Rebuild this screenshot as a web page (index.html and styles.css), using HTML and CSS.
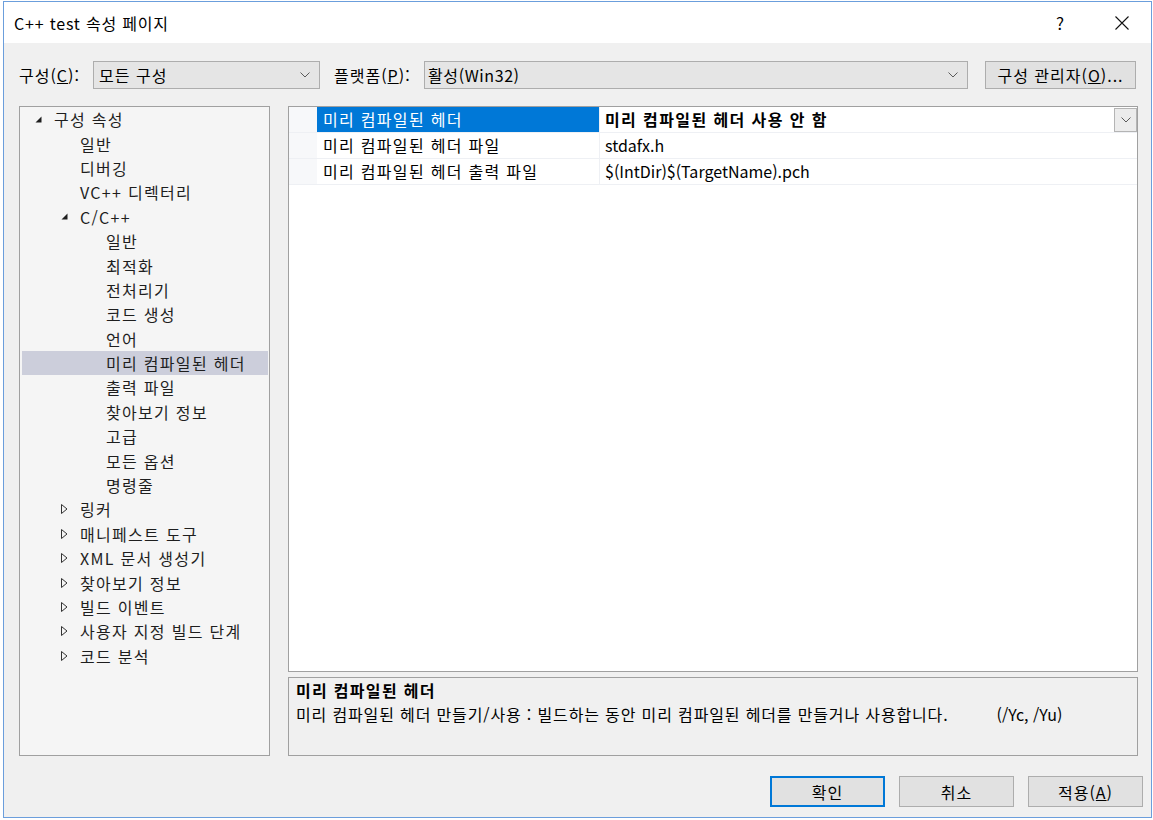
FILE: index.html
```html
<!DOCTYPE html>
<html lang="ko">
<head>
<meta charset="utf-8">
<title>C++ test 속성 페이지</title>
<link rel="stylesheet" href="styles.css">
</head>
<body>
<div class="window">
  <div class="titlebar">
    <span class="title">C++ test 속성 페이지</span>
    <span class="tb-help">?</span>
    <span class="tb-close"><svg width="14" height="14" viewBox="0 0 14 14"><path d="M0.5 0.5 L13.5 13.5 M13.5 0.5 L0.5 13.5" stroke="#111" stroke-width="1.1" fill="none"/></svg></span>
  </div>
  <div class="content">
    <div class="toolbar">
      <span class="tlabel tlabel-config">구성(<u>C</u>):</span>
      <div class="combo combo-config"><span>모든 구성</span><svg class="chev" width="10" height="6" viewBox="0 0 10 6"><path d="M0.5 0.5 L5 5 L9.5 0.5" stroke="#5a5a5a" stroke-width="1" fill="none"/></svg></div>
      <span class="tlabel tlabel-platform">플랫폼(<u>P</u>):</span>
      <div class="combo combo-platform"><span>활성(Win32)</span><svg class="chev" width="10" height="6" viewBox="0 0 10 6"><path d="M0.5 0.5 L5 5 L9.5 0.5" stroke="#5a5a5a" stroke-width="1" fill="none"/></svg></div>
      <button class="btn btn-manager">구성 관리자(<u>O</u>)...</button>
    </div>
    <div class="main">
      <div class="tree">
        <div class="trow l0"><span class="arrow"><svg width="7" height="7" viewBox="0 0 7 7"><polygon points="6.5,0.5 6.5,6.5 0.5,6.5" fill="#1e1e1e"/></svg></span>구성 속성</div>
        <div class="trow l1"><span class="arrow"></span>일반</div>
        <div class="trow l1"><span class="arrow"></span>디버깅</div>
        <div class="trow l1"><span class="arrow"></span>VC++ 디렉터리</div>
        <div class="trow l1"><span class="arrow"><svg width="7" height="7" viewBox="0 0 7 7"><polygon points="6.5,0.5 6.5,6.5 0.5,6.5" fill="#1e1e1e"/></svg></span>C/C++</div>
        <div class="trow l2"><span class="arrow"></span>일반</div>
        <div class="trow l2"><span class="arrow"></span>최적화</div>
        <div class="trow l2"><span class="arrow"></span>전처리기</div>
        <div class="trow l2"><span class="arrow"></span>코드 생성</div>
        <div class="trow l2"><span class="arrow"></span>언어</div>
        <div class="trow l2 selected"><span class="arrow"></span>미리 컴파일된 헤더</div>
        <div class="trow l2"><span class="arrow"></span>출력 파일</div>
        <div class="trow l2"><span class="arrow"></span>찾아보기 정보</div>
        <div class="trow l2"><span class="arrow"></span>고급</div>
        <div class="trow l2"><span class="arrow"></span>모든 옵션</div>
        <div class="trow l2"><span class="arrow"></span>명령줄</div>
        <div class="trow l1"><span class="arrow"><svg width="7" height="10" viewBox="0 0 7 10"><polygon points="0.5,0.5 6,5 0.5,9.5" fill="none" stroke="#333" stroke-width="1"/></svg></span>링커</div>
        <div class="trow l1"><span class="arrow"><svg width="7" height="10" viewBox="0 0 7 10"><polygon points="0.5,0.5 6,5 0.5,9.5" fill="none" stroke="#333" stroke-width="1"/></svg></span>매니페스트 도구</div>
        <div class="trow l1"><span class="arrow"><svg width="7" height="10" viewBox="0 0 7 10"><polygon points="0.5,0.5 6,5 0.5,9.5" fill="none" stroke="#333" stroke-width="1"/></svg></span>XML 문서 생성기</div>
        <div class="trow l1"><span class="arrow"><svg width="7" height="10" viewBox="0 0 7 10"><polygon points="0.5,0.5 6,5 0.5,9.5" fill="none" stroke="#333" stroke-width="1"/></svg></span>찾아보기 정보</div>
        <div class="trow l1"><span class="arrow"><svg width="7" height="10" viewBox="0 0 7 10"><polygon points="0.5,0.5 6,5 0.5,9.5" fill="none" stroke="#333" stroke-width="1"/></svg></span>빌드 이벤트</div>
        <div class="trow l1"><span class="arrow"><svg width="7" height="10" viewBox="0 0 7 10"><polygon points="0.5,0.5 6,5 0.5,9.5" fill="none" stroke="#333" stroke-width="1"/></svg></span>사용자 지정 빌드 단계</div>
        <div class="trow l1"><span class="arrow"><svg width="7" height="10" viewBox="0 0 7 10"><polygon points="0.5,0.5 6,5 0.5,9.5" fill="none" stroke="#333" stroke-width="1"/></svg></span>코드 분석</div>
      </div>
      <div class="right">
        <div class="grid">
          <div class="grow">
            <div class="gutter"></div>
            <div class="gname active">미리 컴파일된 헤더</div>
            <div class="gval bold"><span>미리 컴파일된 헤더 사용 안 함</span><span class="ddbtn"><svg width="10" height="6" viewBox="0 0 10 6"><path d="M0.5 0.5 L5 5 L9.5 0.5" stroke="#5a5a5a" stroke-width="1" fill="none"/></svg></span></div>
          </div>
          <div class="grow">
            <div class="gutter"></div>
            <div class="gname">미리 컴파일된 헤더 파일</div>
            <div class="gval latin">stdafx.h</div>
          </div>
          <div class="grow">
            <div class="gutter"></div>
            <div class="gname">미리 컴파일된 헤더 출력 파일</div>
            <div class="gval latin">$(IntDir)$(TargetName).pch</div>
          </div>
        </div>
        <div class="desc">
          <div class="desc-title">미리 컴파일된 헤더</div>
          <div class="desc-text">미리 컴파일된 헤더 만들기/사용 : 빌드하는 동안 미리 컴파일된 헤더를 만들거나 사용합니다.<span class="desc-switch">(/Yc, /Yu)</span></div>
        </div>
      </div>
    </div>
    <div class="footer">
      <button class="btn btn-foot btn-default">확인</button>
      <button class="btn btn-foot">취소</button>
      <button class="btn btn-foot">적용(<u>A</u>)</button>
    </div>
  </div>
</div>
</body>
</html>
```
FILE: styles.css
```css
* { box-sizing: border-box; }
html, body { margin: 0; padding: 0; background: #ffffff; }
body {
  font-family: "Noto Sans CJK KR", "Noto Sans", sans-serif;
  font-size: 16px;
  color: #1a1a1a;
  letter-spacing: 1px;
}
.window {
  margin: 1px 0 0 3px;
  width: 1149px;
  height: 817px;
  border: 1px solid #6b9edc;
  display: flex;
  flex-direction: column;
  background: #f0f0f0;
}
.titlebar {
  height: 41px;
  background: #ffffff;
  display: flex;
  align-items: center;
  padding-left: 10px;
  flex-shrink: 0;
}
.title { flex: 1; font-size: 16px; color: #000; line-height: 20px; letter-spacing: 0.8px; }
.tb-help { width: 14px; font-size: 17px; color: #000; margin-right: 48px; text-align: center; letter-spacing: 0; }
.tb-close { width: 14px; height: 14px; margin-right: 22px; display: flex; }
.content {
  flex: 1;
  display: flex;
  flex-direction: column;
  padding: 18px 13px 0 15px;
}
.toolbar {
  display: flex;
  align-items: center;
  height: 28px;
}
.tlabel { line-height: 28px; color: #000; white-space: nowrap; }
.tlabel-config { width: 74px; }
.tlabel-platform { width: 90px; margin-left: 14px; }
.combo {
  height: 28px;
  background: #e5e5e5;
  border: 1px solid #adadad;
  display: flex;
  align-items: center;
  justify-content: space-between;
  padding: 0 9px 0 5px;
  color: #000;
}
.combo-config { width: 227px; }
.combo-platform { width: 544px; padding-left: 3px; letter-spacing: 0.6px; }
.chev { display: block; }
.btn {
  font-family: inherit;
  font-size: 16px;
  letter-spacing: 1px;
  background: #e1e1e1;
  border: 1px solid #adadad;
  color: #000;
  padding: 0;
  margin: 0;
}
.btn-manager { width: 151px; height: 28px; margin-left: 17px; line-height: 26px; }
.main {
  display: flex;
  gap: 18px;
  margin-top: 17px;
  height: 650px;
}
.tree {
  width: 251px;
  height: 650px;
  background: #f5f5f5;
  border: 1px solid #a0a0a0;
  padding: 0 1px 0 2px;
}
.trow {
  height: 24.4px;
  display: flex;
  align-items: center;
  color: #1e1e1e;
  letter-spacing: 1.3px;
  white-space: nowrap;
}
.trow.l0 { padding-left: 12px; }
.trow.l1 { padding-left: 38px; }
.trow.l2 { padding-left: 64px; }
.trow.selected { background: #cccedb; }
.arrow { width: 20px; display: flex; align-items: center; padding-left: 1px; }
.arrow svg { display: block; }
.right {
  flex: 1;
  display: flex;
  flex-direction: column;
  gap: 5px;
}
.grid {
  height: 566px;
  background: #ffffff;
  border: 1px solid #a0a0a0;
}
.grow {
  display: flex;
  height: 26px;
  border-bottom: 1px solid #eef0f4;
}
.gutter { width: 28px; background: #f7f8fa; }
.gname {
  width: 283px;
  padding-left: 6px;
  line-height: 25px;
  color: #000;
  border-right: 1px solid #eef0f4;
  letter-spacing: 1.3px;
  white-space: nowrap;
}
.gname.active { background: #0078d7; color: #ffffff; }
.gval {
  flex: 1;
  padding-left: 5px;
  line-height: 25px;
  color: #000;
  display: flex;
  justify-content: space-between;
  align-items: flex-start;
}
.gval.latin { letter-spacing: 0; }
.gval.bold { font-weight: bold; letter-spacing: 1.4px; }
.ddbtn {
  width: 23px;
  height: 24px;
  margin-top: 1px;
  background: #ececec;
  border: 1px solid #b4b4b4;
  display: flex;
  align-items: center;
  justify-content: center;
}
.desc {
  height: 79px;
  background: #f0f0f0;
  border: 1px solid #a0a0a0;
  padding: 0 7px;
  color: #000;
}
.desc-title { font-weight: bold; line-height: 24px; letter-spacing: 1.3px; }
.desc-text { line-height: 24px; white-space: nowrap; letter-spacing: 0.85px; }
.desc-switch { margin-left: 48px; letter-spacing: 0; }
.footer {
  display: flex;
  justify-content: flex-end;
  gap: 14px;
  margin-top: 20px;
  margin-right: -5px;
}
.btn-foot { width: 115px; height: 31px; }
.btn-default { border: 2px solid #0078d7; }
```
